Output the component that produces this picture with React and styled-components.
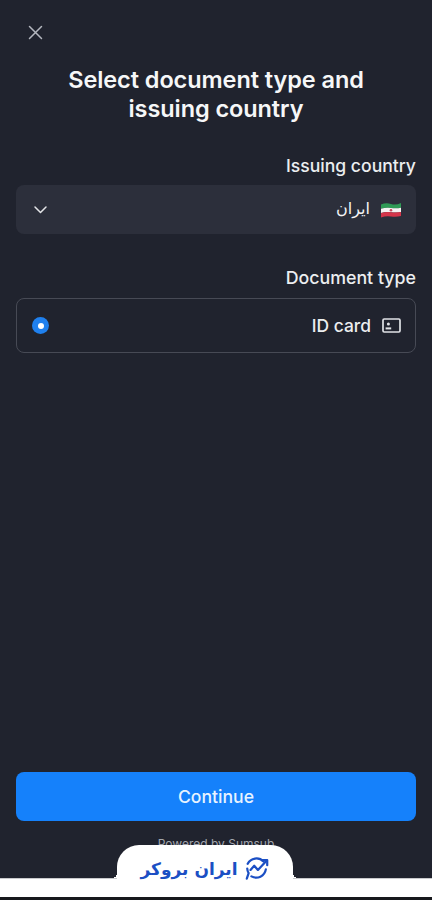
import React from "react";
import styled, { createGlobalStyle } from "styled-components";

const Global = createGlobalStyle`
  html, body { margin: 0; padding: 0; background: #20232e; }
  * { box-sizing: border-box; }
`;

const Page = styled.div`
  position: relative;
  width: 432px;
  height: 900px;
  overflow: hidden;
  display: flex;
  flex-direction: column;
  background: #20232e;
  color: #fff;
  font-family: Inter, "DejaVu Sans", sans-serif;
`;

const Main = styled.main`
  flex: 1;
  display: flex;
  flex-direction: column;
  padding: 0 16px;
  min-height: 0;
`;

const CloseButton = styled.div`
  height: 65px;
  padding: 24px 0 0 11px;
  color: #b4b7bf;
  line-height: 0;
`;

const Title = styled.h1`
  margin: 0 0 31px;
  font-size: 23.5px;
  line-height: 29px;
  font-weight: 600;
  text-align: center;
  letter-spacing: -0.08px;
  color: #f6f7f8;
`;

const FieldLabel = styled.div`
  font-size: ${p => p.$size}px;
  line-height: 24px;
  font-weight: 500;
  text-align: right;
  color: #eceef0;
  margin-bottom: ${p => p.$gap}px;
`;

const Select = styled.div`
  height: 49px;
  border-radius: 8px;
  background: #2c2f3b;
  display: flex;
  align-items: center;
  justify-content: space-between;
  padding: 0 15px 0 17px;
  margin-bottom: 32px;
`;

const Option = styled.div`
  height: 55px;
  border-radius: 8px;
  border: 1px solid #474a55;
  display: flex;
  align-items: center;
  justify-content: space-between;
  padding: 0 14px 0 15px;
`;

const Value = styled.div`
  display: flex;
  align-items: center;
  gap: 11px;
  font-size: 17.4px;
  font-weight: 500;
  color: #eceef0;
`;

const CountryName = styled.span`
  font-family: "DejaVu Sans", sans-serif;
  font-size: 16px;
  font-weight: 400;
  direction: rtl;
  margin-top: -2px;
  color: #f4f5f6;
`;

const Radio = styled.div`
  width: 17px;
  height: 17px;
  border-radius: 50%;
  background: #1f80ee;
  display: flex;
  align-items: center;
  justify-content: center;
  &::after {
    content: "";
    width: 6px;
    height: 6px;
    border-radius: 50%;
    background: #fff;
  }
`;

const Spacer = styled.div`
  flex: 1;
`;

const PrimaryButton = styled.div`
  height: 49px;
  border-radius: 8px;
  background: #1581fb;
  display: flex;
  align-items: center;
  justify-content: center;
  font-size: 17.6px;
  font-weight: 500;
  color: #e8f3ff;
`;

const Powered = styled.div`
  height: 57px;
  padding-top: 15px;
  text-align: center;
  font-size: 12px;
  line-height: 16px;
  color: #a3a6ae;
`;

const WhiteStrip = styled.div`
  height: 19px;
  background: #fff;
  border-top: 1px solid #c9cacd;
`;

const BlackStrip = styled.div`
  height: 3px;
  background: #17181c;
`;

const Badge = styled.div`
  position: absolute;
  left: 117px;
  top: 845px;
  width: 176px;
  height: 35px;
  background: #fff;
  border-radius: 22px 22px 0 0;
  display: flex;
  align-items: center;
  justify-content: center;
  gap: 6px;
  padding: 12px 0 0;
  color: #1b4fc4;
  &::before,
  &::after {
    content: "";
    position: absolute;
    bottom: 2px;
    width: 5px;
    height: 5px;
  }
  &::before {
    left: -5px;
    background: radial-gradient(circle at 0 0, transparent 5px, #fff 5px);
  }
  &::after {
    right: -5px;
    background: radial-gradient(circle at 100% 0, transparent 5px, #fff 5px);
  }
`;

const BadgeText = styled.span`
  font-family: "DejaVu Sans", sans-serif;
  font-size: 17px;
  line-height: 22px;
  font-weight: 700;
  direction: rtl;
  color: #1b4fc4;
`;

const Flag = () => (
  <svg width="20" height="16" viewBox="0 0 20 16">
    <path d="M0 2.5 Q5 0.5 10 2 T20 1 V5.8 Q15 7 10 6 T0 6.8Z" fill="#2f9a55" />
    <path d="M0 6.8 Q5 5.2 10 6 T20 5.8 V10 Q15 11 10 10.2 T0 11Z" fill="#f5f3f2" />
    <path d="M0 11 Q5 9.6 10 10.2 T20 10 V14 Q15 15.2 10 14.4 T0 15.4Z" fill="#d5354a" />
    <circle cx="10" cy="8.2" r="1.3" fill="#c9485a" />
  </svg>
);

export default function App() {
  return (
    <Page>
      <Global />
      <Main>
        <CloseButton>
          <svg width="17" height="17" viewBox="0 0 17 17" fill="none" stroke="currentColor" strokeWidth="1.5" strokeLinecap="round">
            <path d="M2.5 2.5 L14.5 14.5 M14.5 2.5 L2.5 14.5" />
          </svg>
        </CloseButton>
        <Title>
          Select document type and
          <br />
          issuing country
        </Title>
        <FieldLabel $gap={7} $size={17.6}>Issuing country</FieldLabel>
        <Select>
          <svg width="15" height="15" viewBox="0 0 15 15" fill="none" stroke="#e4e5e8" strokeWidth="1.5" strokeLinecap="round" strokeLinejoin="round">
            <path d="M2 5 L7.5 10.5 L13 5" />
          </svg>
          <Value>
            <CountryName>ایران</CountryName>
            <Flag />
          </Value>
        </Select>
        <FieldLabel $gap={8} $size={17.8}>Document type</FieldLabel>
        <Option>
          <Radio />
          <Value>
            <span>ID card</span>
            <svg width="19" height="15" viewBox="0 0 19 15" fill="none" stroke="#e0e2e6" strokeWidth="1.7">
              <rect x="1" y="1" width="17" height="13" rx="1.2" />
              <circle cx="6.4" cy="6" r="1.5" fill="#e0e2e6" stroke="none" />
              <path d="M3.6 10.4 H9.2" strokeWidth="2" />
            </svg>
          </Value>
        </Option>
        <Spacer />
        <PrimaryButton>Continue</PrimaryButton>
        <Powered>Powered by Sumsub</Powered>
      </Main>
      <WhiteStrip />
      <BlackStrip />
      <Badge>
        <BadgeText>ایران بروکر</BadgeText>
        <svg width="26" height="25" viewBox="0 0 28 26" fill="none" stroke="currentColor" strokeWidth="2.4" strokeLinecap="round" strokeLinejoin="round">
          <path d="M21 5.5 A10.5 10.5 0 0 0 4 8" />
          <path d="M23.5 14 A10.5 10.5 0 0 1 8 21.5" />
          <path d="M3.5 13 A10.5 10.5 0 0 0 5 18 L3 24" />
          <path d="M7 14.5 L11 10 L15 14.5 L24 5" />
          <path d="M19.5 4 H25 V9.5" />
        </svg>
      </Badge>
    </Page>
  );
}
